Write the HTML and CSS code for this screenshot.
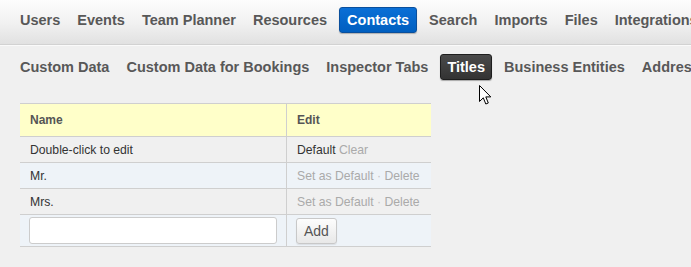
FILE: index.html
```html
<!DOCTYPE html>
<html lang="en">
<head>
    <meta charset="UTF-8">
    <title>Contacts - Titles</title>
    <link rel="stylesheet" href="styles.css">
</head>
<body>
    <div class="topbar">
        <nav class="nav">
            <a class="nav-item">Users</a>
            <a class="nav-item">Events</a>
            <a class="nav-item">Team Planner</a>
            <a class="nav-item">Resources</a>
            <a class="nav-item active">Contacts</a>
            <a class="nav-item">Search</a>
            <a class="nav-item">Imports</a>
            <a class="nav-item">Files</a>
            <a class="nav-item">Integrations</a>
        </nav>
    </div>

    <nav class="subnav">
        <a class="nav-item">Custom Data</a>
        <a class="nav-item">Custom Data for Bookings</a>
        <a class="nav-item">Inspector Tabs</a>
        <a class="nav-item current">Titles
            <svg class="cursor" width="13" height="21" viewBox="0 0 13 21">
                <path d="M0.5 0.5 L0.5 16.5 L4.3 12.8 L6.8 19 L9.3 18 L6.8 11.9 L11.8 11.9 Z" fill="#fff" stroke="#000" stroke-width="1" stroke-linejoin="miter"/>
            </svg>
        </a>
        <a class="nav-item">Business Entities</a>
        <a class="nav-item">Addresses</a>
    </nav>

    <table class="grid">
        <thead>
            <tr>
                <th class="col-name">Name</th>
                <th>Edit</th>
            </tr>
        </thead>
        <tbody>
            <tr>
                <td>Double-click to edit</td>
                <td>Default <span class="link">Clear</span></td>
            </tr>
            <tr class="alt">
                <td>Mr.</td>
                <td><span class="link">Set as Default</span> <span class="dot">&middot;</span> <span class="link">Delete</span></td>
            </tr>
            <tr>
                <td>Mrs.</td>
                <td><span class="link">Set as Default</span> <span class="dot">&middot;</span> <span class="link">Delete</span></td>
            </tr>
            <tr class="alt add-row">
                <td><input type="text" class="title-input"></td>
                <td><button class="add-btn">Add</button></td>
            </tr>
        </tbody>
    </table>
</body>
</html>
```

FILE: styles.css
```css
* {
    margin: 0;
    padding: 0;
    box-sizing: border-box;
    font-family: 'Liberation Sans', Arial, sans-serif;
}

body {
    background: #f0f0f0;
    width: 691px;
    height: 267px;
    overflow: hidden;
}

.topbar {
    height: 45px;
    background: linear-gradient(to bottom, #fdfdfd 0%, #f2f2f2 50%, #e1e1e1 100%);
    border-bottom: 1px solid #d2d2d2;
    box-shadow: 0 1px 0 #fafafa;
    padding: 7px 0 0 13px;
}

.nav,
.subnav {
    display: flex;
    gap: 3px;
    white-space: nowrap;
}

.nav-item {
    display: block;
    padding: 0 6px;
    border: 1px solid transparent;
    border-radius: 3px;
    line-height: 24px;
    font-size: 14.5px;
    font-weight: bold;
    color: #585858;
    cursor: pointer;
}

.nav-item.active {
    margin: 0 2px;
    padding: 0 7px;
    background: linear-gradient(to bottom, #0a6fd6 0%, #005fc0 100%);
    border-color: #0a4f9c;
    color: #fff;
    box-shadow: 0 1px 1px rgba(0, 0, 0, 0.25);
}

.subnav {
    padding: 9px 0 0 13px;
}

.nav-item.current {
    position: relative;
    margin: 0 2px;
    background: linear-gradient(to bottom, #4a4a4a 0%, #333 100%);
    border-color: #1e1e1e;
    color: #fff;
    box-shadow: 0 1px 1px rgba(0, 0, 0, 0.3);
}

.cursor {
    position: absolute;
    left: 38px;
    top: 30px;
}

.grid {
    margin: 23px 0 0 20px;
    width: 411px;
    border-collapse: collapse;
    font-size: 12.2px;
    color: #333;
}

.grid th,
.grid td {
    border-top: 1px solid #cfcfcf;
    border-bottom: 1px solid #cfcfcf;
    text-align: left;
    padding: 0 10px;
    height: 26px;
    white-space: nowrap;
}

.grid th + th,
.grid td + td {
    border-left: 1px solid #cfcfcf;
}

.grid th {
    background: #ffffc9;
    color: #555;
    font-weight: bold;
    font-size: 12px;
    height: 33px;
}

.col-name {
    width: 266px;
}

.grid tr.alt td {
    background: #eef3f8;
}

.link {
    color: #aaa;
}

.dot {
    color: #c4c4c4;
}

.add-row td {
    height: 32px;
    padding: 0 9px;
}

.title-input {
    display: block;
    width: 248px;
    height: 27px;
    border: 1px solid #ccc;
    border-radius: 3px;
    background: #fff;
}

.add-btn {
    display: block;
    padding: 0 7px;
    height: 26px;
    border: 1px solid #c8c8c8;
    border-radius: 3px;
    background: linear-gradient(to bottom, #fdfdfd 0%, #e8e8e8 100%);
    color: #555;
    font-size: 14px;
    box-shadow: 0 1px 1px rgba(0, 0, 0, 0.08);
}
```
